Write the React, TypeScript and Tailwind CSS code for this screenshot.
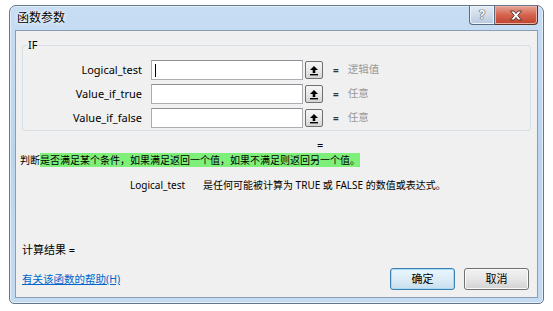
import React from "react";

const rows = [
  { label: "Logical_test", value: "逻辑值", caret: true },
  { label: "Value_if_true", value: "任意", caret: false },
  { label: "Value_if_false", value: "任意", caret: false },
];

const CollapseButton: React.FC = () => (
  <button className="w-[18px] h-[18px] flex items-center justify-center border border-[#707070] rounded-[2px] bg-gradient-to-b from-[#f6f6f6] via-[#e9e9e9] to-[#d4d4d4]">
    <svg width="10" height="11" viewBox="0 0 10 11">
      <path d="M5 1 L9 5 L6.3 5 L6.3 8 L3.7 8 L3.7 5 L1 5 Z" fill="#000" />
      <rect x="1" y="9" width="8" height="1.4" fill="#000" />
    </svg>
  </button>
);

const App: React.FC = () => {
  return (
    <div
      className="w-[553px] h-[311px] bg-white pl-[9px] pt-[5px]"
      style={{ fontFamily: '"Noto Sans", "Noto Sans CJK SC", sans-serif' }}
    >
      <div className="w-[535px] h-[299px] flex flex-col rounded-t-[7px] rounded-b-[5px] border border-[#65778a] bg-gradient-to-b from-[#c7ddf4] via-[#bcd5ef] to-[#c4dbf2] shadow-[inset_0_0_0_1px_#e4eef9]">
        {/* title bar */}
        <div className="h-[24px] flex items-start justify-between pl-[7px] pr-[5px]">
          <span className="mt-[5px] text-[12px] leading-[14px] text-black [text-shadow:0_0_5px_#ffffff,0_0_3px_#ffffff]">
            函数参数
          </span>
          <div className="flex">
            <div className="w-[26px] h-[19px] flex items-center justify-center border border-[#5b6a7b] border-t-0 rounded-bl-[4px] bg-gradient-to-b from-[#e4ecf5] via-[#cfdceb] to-[#b7c9de] shadow-[inset_0_0_0_1px_#eef4fa]">
              <span className="text-[12px] leading-none font-bold text-white [text-shadow:0_0_1px_#3a4654,0_0_1px_#3a4654,0_0_1px_#3a4654]">
                ?
              </span>
            </div>
            <div className="w-[43px] h-[19px] flex items-center justify-center border border-l-0 border-[#5b3028] border-t-0 rounded-br-[4px] bg-gradient-to-b from-[#e6a496] via-[#d4634e] to-[#c0412c] shadow-[inset_0_0_0_1px_#eab0a4]">
              <svg width="14" height="11" viewBox="0 0 14 11">
                <path
                  d="M1.5 1 L5 1 L7 3.6 L9 1 L12.5 1 L8.8 5.5 L12.5 10 L9 10 L7 7.4 L5 10 L1.5 10 L5.2 5.5 Z"
                  fill="#ffffff"
                  stroke="#4a2a24"
                  strokeWidth="0.9"
                  strokeLinejoin="round"
                />
              </svg>
            </div>
          </div>
        </div>

        {/* client area */}
        <div className="mx-[5px] mb-[5px] flex-1 flex flex-col border border-[#8a9db2] bg-[#f0f0f0] text-[11px] text-black">
          <fieldset className="mt-[7px] mx-[6px] border border-[#d5dfe5] rounded-[3px] pb-[2px]">
            <legend className="ml-[4px] px-[1px] leading-[14px] text-[11px]">IF</legend>
            <div className="flex flex-col gap-[4px] pt-[8px]">
              {rows.map((r) => (
                <div key={r.label} className="flex items-center h-[20px]">
                  <span className="w-[119px] text-right leading-[14px]">{r.label}</span>
                  <div className="ml-[9px] w-[152px] h-[20px] border border-[#abadb3] border-t-[#8e9096] bg-white flex items-center pl-[3px]">
                    {r.caret && <div className="w-px h-[13px] bg-black" />}
                  </div>
                  <div className="ml-[2px]">
                    <CollapseButton />
                  </div>
                  <span className="ml-[10px] font-bold text-[10px] text-[#333]">=</span>
                  <span className="ml-[9px] text-[10.5px] text-[#999999]">{r.value}</span>
                </div>
              ))}
            </div>
          </fieldset>

          <div className="mt-[7px] h-[14px] leading-[14px] pl-[301px]">=</div>
          <div className="h-[16px] leading-[16px] pl-[4px] text-[10px]">
            判断
            <span className="bg-[#7ef07a]">
              是否满足某个条件，如果满足返回一个值，如果不满足则返回另一个值。
            </span>
          </div>
          <div className="mt-[10px] h-[14px] leading-[14px] pl-[114px] flex text-[10px]">
            <span className="w-[73px]">Logical_test</span>
            <span>是任何可能被计算为 TRUE 或 FALSE 的数值或表达式。</span>
          </div>

          <div className="flex-1" />
          <div className="h-[14px] leading-[14px] pl-[6px]">计算结果 =</div>
          <div className="mt-[11px] mb-[7px] flex items-center justify-between pl-[6px] pr-[8px]">
            <a className="text-[#0066cc] underline leading-[14px] text-[10.5px]" href="#">
              有关该函数的帮助(H)
            </a>
            <div className="flex gap-[9px]">
              <button className="w-[65px] h-[22px] rounded-[3px] border border-[#3c7fb1] bg-gradient-to-b from-[#eaf6fd] via-[#dcecf7] to-[#c8dfef] shadow-[inset_0_0_0_1px_#a8dbf6] text-[11px]">
                确定
              </button>
              <button className="w-[65px] h-[22px] rounded-[3px] border border-[#707070] bg-gradient-to-b from-[#f2f2f2] via-[#e6e6e6] to-[#d3d3d3] shadow-[inset_0_0_0_1px_#fbfbfb] text-[11px]">
                取消
              </button>
            </div>
          </div>
        </div>
      </div>
    </div>
  );
};

export default App;
